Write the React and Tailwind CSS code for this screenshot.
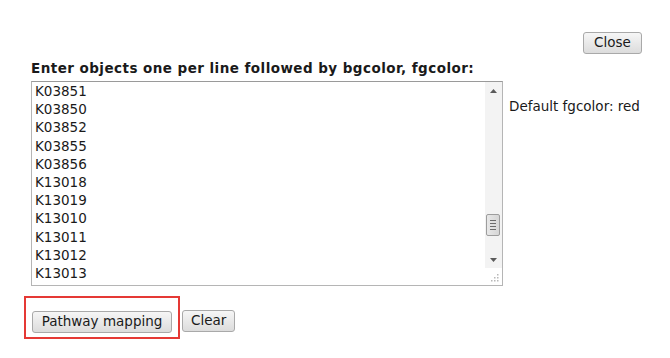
import React from 'react';

const objects = [
  'K03851',
  'K03850',
  'K03852',
  'K03855',
  'K03856',
  'K13018',
  'K13019',
  'K13010',
  'K13011',
  'K13012',
  'K13013',
];

const btn =
  'h-[22px] px-[8px] rounded-[3px] border border-[#a9a9a9] bg-gradient-to-b from-[#f6f6f6] to-[#dcdcdc] text-[13.5px] leading-none text-[#1a1a1a]';

const App = () => {
  return (
    <div className="w-[670px] h-[358px] bg-white text-[#1a1a1a] font-['DejaVu_Sans',Verdana,sans-serif] overflow-hidden">
      {/* Top bar */}
      <div className="flex justify-end pt-[32px] pr-[28px]">
        <button className={`${btn} w-[59px]`}>Close</button>
      </div>

      <div className="pl-[31px]">
        <h3 className="mt-[6px] mb-[5px] text-[13.5px] leading-[16px] font-bold tracking-[0.45px]">
          Enter objects one per line followed by bgcolor, fgcolor:
        </h3>

        <div className="flex">
          {/* Fake textarea */}
          <div className="flex w-[472px] h-[205px] border border-[#b5b5b5] border-t-[#9a9a9a] bg-white">
            <div className="flex-1 overflow-hidden pl-[3px] text-[13.5px] leading-[18.2px]">
              {objects.map((o) => (
                <div key={o}>{o}</div>
              ))}
            </div>
            {/* Scrollbar */}
            <div className="w-[17px] flex flex-col bg-[#f3f3f3]">
              <div className="h-[17px] flex items-center justify-center">
                <svg width="7" height="4" viewBox="0 0 7 4">
                  <path d="M3.5 0 L7 4 L0 4 Z" fill="#5a5a5a" />
                </svg>
              </div>
              <div className="flex-1 relative">
                <div className="absolute left-[1px] right-[2px] top-[115px] h-[22px] rounded-[2px] border border-[#9d9d9d] bg-gradient-to-r from-[#e8e8e8] to-[#d6d6d6] flex flex-col items-center justify-center gap-[2px]">
                  <div className="w-[6px] h-px bg-[#6b6b6b]" />
                  <div className="w-[6px] h-px bg-[#6b6b6b]" />
                  <div className="w-[6px] h-px bg-[#6b6b6b]" />
                  <div className="w-[6px] h-px bg-[#6b6b6b]" />
                </div>
              </div>
              <div className="h-[17px] flex items-center justify-center">
                <svg width="7" height="4" viewBox="0 0 7 4">
                  <path d="M0 0 L7 0 L3.5 4 Z" fill="#5a5a5a" />
                </svg>
              </div>
              <div className="h-[17px] bg-white flex items-end justify-end pr-[3px] pb-[3px]">
                <svg width="8" height="8" viewBox="0 0 8 8">
                  <rect x="6" y="0" width="1.5" height="1.5" fill="#b8b8b8" />
                  <rect x="3" y="3" width="1.5" height="1.5" fill="#b8b8b8" />
                  <rect x="6" y="3" width="1.5" height="1.5" fill="#b8b8b8" />
                  <rect x="0" y="6" width="1.5" height="1.5" fill="#b8b8b8" />
                  <rect x="3" y="6" width="1.5" height="1.5" fill="#b8b8b8" />
                  <rect x="6" y="6" width="1.5" height="1.5" fill="#b8b8b8" />
                </svg>
              </div>
            </div>
          </div>

          <div className="ml-[6px] mt-[16px] text-[13.5px] leading-[18px] whitespace-nowrap">
            Default fgcolor: red
          </div>
        </div>
      </div>

      {/* Buttons */}
      <div className="flex items-end pl-[24px] mt-[10px]">
        <div className="border-2 border-[#e53935] pt-[11px] pb-[4px] pl-[6px] pr-[6px]">
          <button className={`${btn} w-[140px]`}>Pathway mapping</button>
        </div>
        <button className={`${btn} w-[53px] ml-[2px] mb-[7px]`}>Clear</button>
      </div>
    </div>
  );
};

export default App;
